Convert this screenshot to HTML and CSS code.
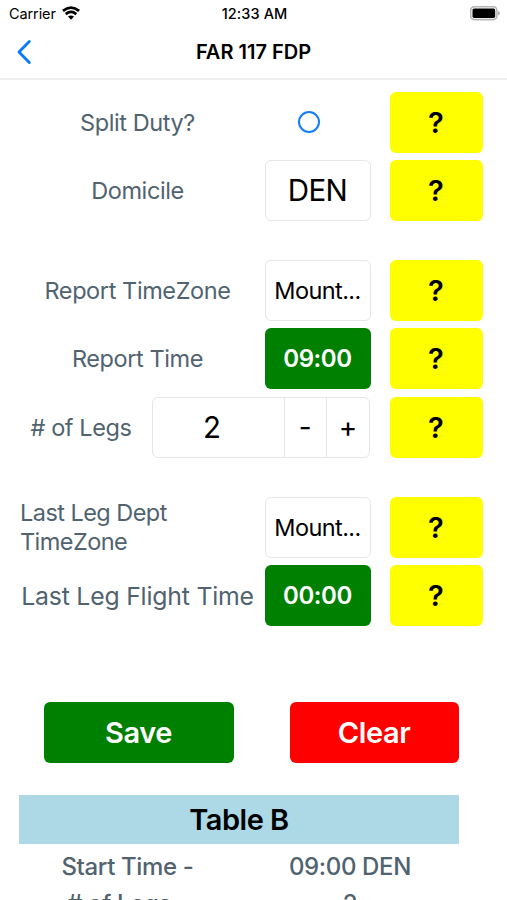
FILE: index.html
```html
<!DOCTYPE html>
<html lang="en">
<head>
<meta charset="utf-8">
<title>FAR 117 FDP</title>
<link rel="stylesheet" href="styles.css">
</head>
<body>
<div class="screen">
  <header>
    <div class="status">
      <div class="carrier"><span>Carrier</span>
        <svg width="18" height="14" viewBox="0 0 18 14" fill="none" stroke="#000" stroke-width="2.7"><path d="M.9 4.9Q9-1.8 17.1 4.9"/><path d="M3.7 8.1Q9 3.8 14.3 8.1"/><path d="M6 10.6Q9 8.2 12 10.6L9 13.8Z" fill="#000" stroke="none"/></svg>
      </div>
      <span class="clock">12:33 AM</span>
      <svg class="battery" width="30" height="15" viewBox="0 0 30 15"><rect x=".7" y=".7" width="26.2" height="12.9" rx="3.6" fill="#fff" stroke="#b5b5b5" stroke-width="1.6"/><rect x="2.5" y="2.5" width="22.7" height="9.4" rx="1.6"/><path d="M28.2 5v4.5q1.6-.6 1.6-2.25T28.2 5Z" fill="#aaa"/></svg>
    </div>
    <div class="nav">
      <svg class="back" width="16" height="26" viewBox="0 0 16 26" fill="none" stroke="#087bf5" stroke-width="2.9" stroke-linecap="round" stroke-linejoin="round"><path d="M13.3 2.6 3 13 13.3 23.4"/></svg>
      <h1>FAR 117 FDP</h1>
      <span></span>
    </div>
  </header>
  <main>
    <section class="group">
      <div class="row"><span class="label">Split Duty?</span><span class="radio"></span><button class="help">?</button></div>
      <div class="row"><span class="label">Domicile</span><span class="field big">DEN</span><button class="help">?</button></div>
    </section>
    <section class="group">
      <div class="row"><span class="label">Report TimeZone</span><span class="field zone">Mount...</span><button class="help">?</button></div>
      <div class="row"><span class="label">Report Time</span><button class="time">09:00</button><button class="help">?</button></div>
      <div class="row legs"><span class="label">#&nbsp;of Legs</span><div class="stepper"><span class="count">2</span><span class="minus">-</span><span class="plus">+</span></div><button class="help">?</button></div>
    </section>
    <section class="group">
      <div class="row"><span class="label multi">Last Leg Dept<br>TimeZone</span><span class="field zone">Mount...</span><button class="help">?</button></div>
      <div class="row"><span class="label wide">Last Leg Flight Time</span><button class="time">00:00</button><button class="help">?</button></div>
    </section>
    <div class="actions"><button class="save">Save</button><button class="clear">Clear</button></div>
    <section class="table">
      <h2>Table B</h2>
      <div class="pair"><span>Start Time -</span><span>09:00 DEN</span></div>
      <div class="pair"><span># of Legs -</span><span>2</span></div>
    </section>
  </main>
</div>
</body>
</html>
```
FILE: styles.css
```css
* { box-sizing: border-box; }
body { margin: 0; background: #fff; font-family: Inter, "Liberation Sans", sans-serif; color: #000; }
button { border: 0; padding: 0; font: inherit; color: inherit; }
.screen { height: 900px; overflow: hidden; }
header { height: 80px; border-bottom: 2px solid #efefef; }
.status { height: 27px; display: grid; grid-template-columns: 1fr auto 1fr; align-items: center; padding: 0 7px 0 9px; font-size: 14.5px; }
.carrier { display: flex; align-items: center; gap: 6px; letter-spacing: -.1px; }
.carrier svg { margin-top: -2px; }
.clock { font-weight: 500; font-size: 14.5px; letter-spacing: .1px; }
.battery { justify-self: end; }
.nav { height: 50px; display: grid; grid-template-columns: 1fr auto 1fr; align-items: center; padding: 0 16px; }
.back { display: block; }
h1 { margin: 0; font-size: 20px; font-weight: 600; letter-spacing: 0; }
main { padding: 11.5px 24.5px 0 20px; }
.group { display: grid; gap: 7.3px; margin-bottom: 39.3px; }
.row { display: grid; grid-template-columns: 235px 106px 1fr; column-gap: 9.5px; height: 61px; align-items: center; }
.row > :nth-child(3) { justify-self: end; }
.row.legs { grid-template-columns: 122px 218.5px 1fr; }
.label { font-size: 23.5px; color: #50636f; text-align: center; white-space: nowrap; letter-spacing: -.4px; }
.multi { text-align: left; line-height: 29px; letter-spacing: -.55px; }
.wide { font-size: 24.8px; letter-spacing: -.2px; }
.field, .stepper { height: 61px; border: 1px solid #e6e6e6; border-radius: 6px; }
.field { display: flex; align-items: center; justify-content: center; }
.big { font-size: 29.5px; letter-spacing: -.6px; }
.zone { font-size: 23.5px; letter-spacing: -.6px; }
.time { height: 61px; border-radius: 6px; background: #008000; color: #fff; font-size: 24px; font-weight: 600; letter-spacing: -.4px; }
.help { width: 93px; height: 61px; border-radius: 6px; background: #ff0; font-size: 29px; font-weight: 600; }
.radio { width: 22px; height: 22px; border: 2.5px solid #157efb; border-radius: 50%; margin-left: 33px; }
.stepper { display: grid; grid-template-columns: 1fr 42.5px 43px; align-items: stretch; }
.stepper span { display: flex; align-items: center; justify-content: center; }
.count { font-size: 29.5px; padding-right: 12px; }
.minus, .plus { border-left: 1px solid #e6e6e6; font-size: 28px; }
.actions { display: flex; gap: 56px; padding: 36.5px 0 0 23.5px; }
.actions button { height: 61px; border-radius: 6px; color: #fff; font-size: 29px; font-weight: 600; letter-spacing: -.4px; }
.save { width: 190px; background: #008000; }
.clear { width: 169px; background: #f00; }
.table { width: 440px; margin: 32px 0 0 -1px; }
h2 { margin: 0; height: 49px; line-height: 49px; background: #add8e6; text-align: center; font-size: 29px; font-weight: 600; letter-spacing: -.5px; }
.pair { height: 37px; margin-top: 4px; display: grid; grid-template-columns: 217px 1fr; align-items: center; text-align: center; font-size: 24px; font-weight: 500; letter-spacing: -.35px; color: #50636f; }
.pair + .pair { margin-top: 0; }
.pair span + span { padding-left: 5px; }
```
